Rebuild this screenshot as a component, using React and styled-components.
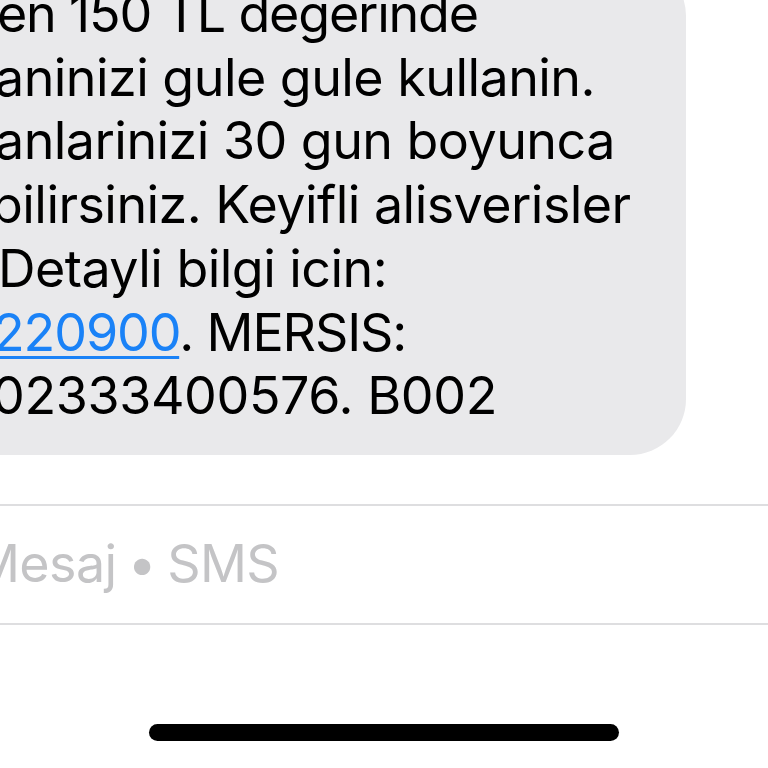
import React from 'react';
import styled, { createGlobalStyle } from 'styled-components';

const GlobalStyle = createGlobalStyle`
  html, body {
    margin: 0;
    padding: 0;
    background: #ffffff;
  }
  body {
    font-family: Inter, "Noto Sans", "Liberation Sans", sans-serif;
    -webkit-font-smoothing: antialiased;
  }
`

const Screen = styled.div`
  width: 768px;
  height: 768px;
  overflow: hidden;
  display: flex;
  flex-direction: column;
  background: #ffffff;
`

const Bubble = styled.div`
  align-self: flex-start;
  width: 760px;
  margin-left: -74px;
  margin-top: -40px;
  padding: 22px 0 27px 74px;
  box-sizing: border-box;
  background: #e9e9eb;
  border-radius: 0 56px 56px 0;
`

const Line = styled.div`
  white-space: nowrap;
  font-size: 52px;
  line-height: 63.7px;
  letter-spacing: ${p => p.$spacing ?? -0.55}px;
  color: #000000;
  margin-left: ${p => p.$shift || 0}px;
`

const Link = styled.span`
  color: #1a82f7;
  text-decoration: underline;
  text-decoration-thickness: 3px;
  text-underline-offset: 5px;
`

const InputBar = styled.div`
  margin-top: 49px;
  margin-left: -60px;
  width: 900px;
  height: 121px;
  box-sizing: border-box;
  border: 2px solid #dedee0;
  border-radius: 60px;
  display: flex;
  align-items: center;
  padding-left: ${p => 60 + (p.$shift || 0)}px;
`

const Placeholder = styled.span`
  font-size: 52px;
  line-height: 1;
  letter-spacing: -0.6px;
  word-spacing: -3px;
  color: #c4c4c6;
  white-space: nowrap;
`

const HomeBar = styled.div`
  align-self: center;
  margin-top: 99px;
  width: 470px;
  height: 17px;
  border-radius: 9px;
  background: #000000;
`

const lines = [
  { shift: -3, spacing: -1.2, text: 'en 150 TL degerinde' },
  { shift: -5, text: 'aninizi gule gule kullanin.' },
  { shift: -5, text: 'anlarinizi 30 gun boyunca' },
  { shift: -9, text: 'bilirsiniz. Keyifli alisverisler' },
  { shift: -2, text: 'Detayli bilgi icin:' },
]

export default function App() {
  return (
    <Screen>
      <GlobalStyle />
      <Bubble>
        {lines.map((l, i) => (
          <Line key={i} $shift={l.shift} $spacing={l.spacing}>{l.text}</Line>
        ))}
        <Line $shift={-7} $spacing={-1.1}>
          <Link>220900</Link>. MERSIS:
        </Line>
        <Line $shift={-8} $spacing={-0.4}>02333400576. B002</Line>
      </Bubble>
      <InputBar $shift={-29}>
        <Placeholder>Mesaj • SMS</Placeholder>
      </InputBar>
      <HomeBar />
    </Screen>
  )
}
